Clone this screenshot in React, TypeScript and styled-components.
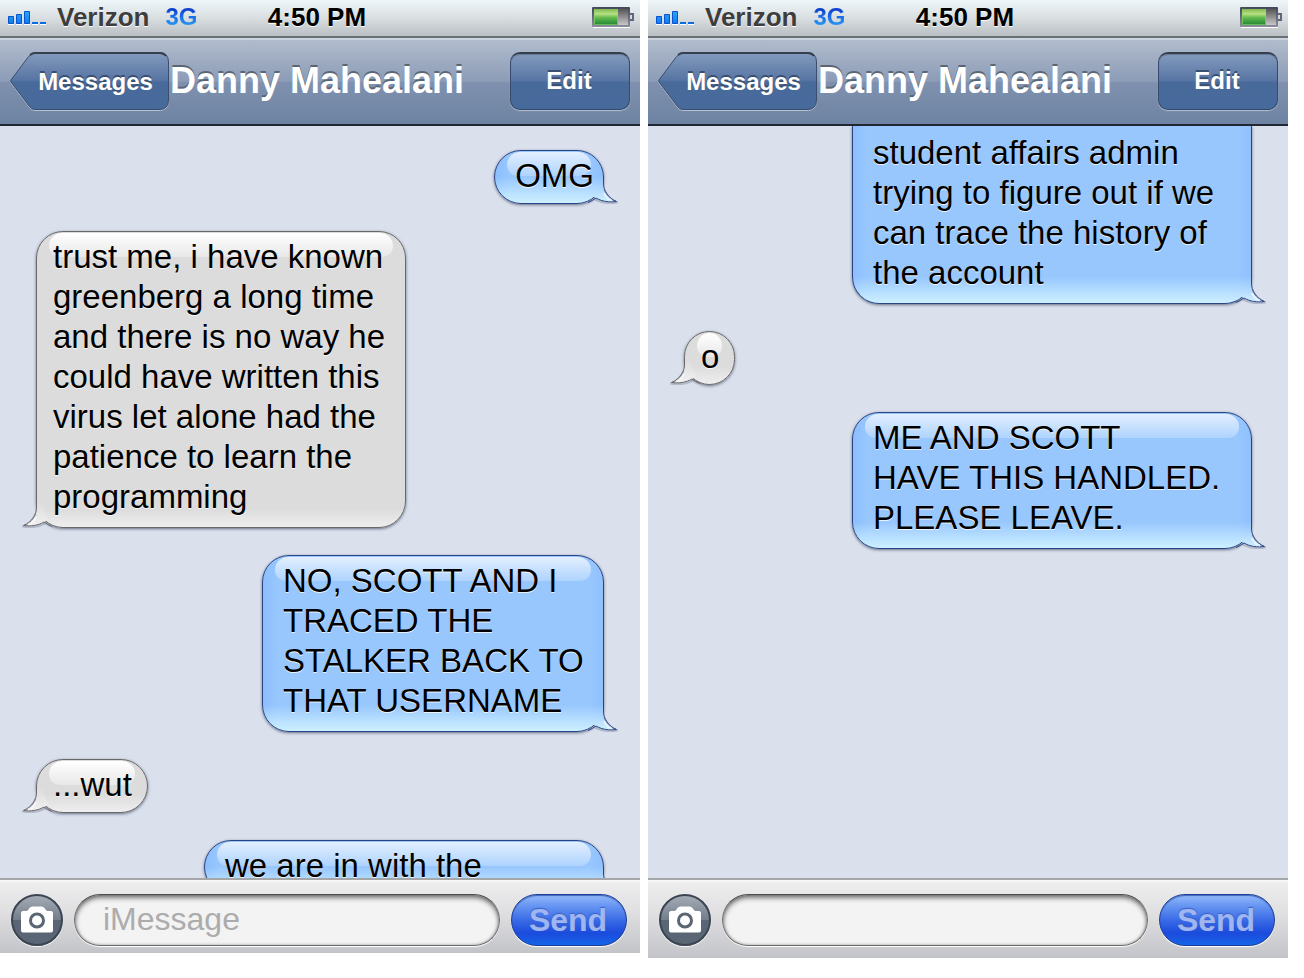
import React, { useId } from "react";
import styled, { createGlobalStyle, css } from "styled-components";

const sans = `"Liberation Sans", Arial, Helvetica, sans-serif`;

const GlobalStyle = createGlobalStyle`
  *, *::before, *::after { box-sizing: border-box; }
  body { margin: 0; background: #fff; font-family: ${sans}; }
  button, input { font-family: inherit; margin: 0; }
`;

type Tone = "blue" | "grey";

const Page = styled.main`
  display: grid;
  grid-template-columns: 1fr 1fr;
  align-items: start;
  gap: 8px;
  padding-right: 16px;
`;

const Phone = styled.section`
  display: flex;
  flex-direction: column;
  min-width: 0;
`;

const StatusBar = styled.div`
  display: grid;
  grid-template-columns: 1fr auto 1fr;
  align-items: center;
  height: 38px;
  padding: 0 6px 2px 0;
  border-bottom: 2px solid #6b7074;
  background: linear-gradient(#eff6f9, #d9dfe1 50%, #b9bfc2);
  font-size: 26px;
  line-height: 32px;
  font-weight: 700;
  text-shadow: 0 1px 0 #fff;
`;

const Carrier = styled.div`
  display: flex;
  align-items: center;
  gap: 10px;
  padding-left: 8px;
  color: #3d3d3d;
`;

const Network = styled.span`
  margin-left: 6px;
  font-size: 24px;
  text-shadow: none;
  color: transparent;
  background: linear-gradient(#0a35c8 20%, #1d6fe8 50%, #2ba4f6 85%);
  background-clip: text;
  -webkit-background-clip: text;
`;

const Clock = styled.time`
  color: #000;
`;

const BatterySlot = styled.div`
  display: flex;
  justify-content: flex-end;
`;

const NavBar = styled.header`
  display: flex;
  align-items: center;
  height: 88px;
  padding: 0 10px 2px;
  border-top: 2px solid #ccd4df;
  border-bottom: 2px solid #1f2733;
  background: linear-gradient(#b1bccd, #8b9bb6 50%, #7f91af 50%, #6e84a2);
`;

const Title = styled.h1`
  flex: 1;
  margin: 0;
  white-space: nowrap;
  color: #fff;
  font-size: 36px;
  line-height: 40px;
  font-weight: 700;
  text-shadow: 0 -2px 0 #5b6675;
`;

const buttonText = css`
  color: #fff;
  font-size: 24px;
  line-height: 28px;
  font-weight: 700;
  text-shadow: 0 -2px 0 #3a4e70;
`;

const BackButton = styled.button`
  ${buttonText}
  position: relative;
  width: 160px;
  height: 60px;
  padding: 2px 0 0 11px;
  border: 0;
  background: none;
`;

const BackShape = styled.svg`
  position: absolute;
  inset: 0;
`;

const BackLabel = styled.span`
  position: relative;
`;

const EditButton = styled.button`
  ${buttonText}
  width: 120px;
  height: 58px;
  padding: 0 2px 2px 0;
  border: 1px solid #34496c;
  border-top: 2px solid #363f4d;
  border-radius: 10px;
  background: linear-gradient(#839bbd, #5875a4 48%, #486a9b 52%, #476a9c);
  box-shadow: 0 1px 1px #b5c0d0, inset 0 1px 1px #65789a;
`;

const Conversation = styled.ol<{ $scrolled?: boolean }>`
  display: flex;
  flex-direction: column;
  gap: 27px;
  height: calc(100vh - 226px);
  min-height: 400px;
  margin: 0;
  padding: ${(p) => (p.$scrolled ? "0" : "24px")} 36px 0;
  overflow: hidden;
  list-style: none;
  background: #dae0ec;
`;

const tones = {
  blue: {
    edge: "#2a4384",
    side: "flex-end",
    end: "9px",
    start: "20px",
    fill: "linear-gradient(rgba(208,241,255,0), #cdf0ff) bottom / 100% 26px no-repeat, linear-gradient(90deg, #8cbefd, #98c7fe 14px, #98c7fe calc(100% - 14px), #90c1fd)",
  },
  grey: {
    edge: "#686868",
    side: "flex-start",
    end: "15px",
    start: "16px",
    fill: "linear-gradient(rgba(240,240,240,0), #eeeeee) bottom / 100% 18px no-repeat, linear-gradient(#dcdcdc, #dcdcdc)",
  },
};

const Bubble = styled.li<{ $tone: Tone; $width?: number; $long: boolean; $continued?: boolean }>`
  position: relative;
  flex: none;
  align-self: ${(p) => tones[p.$tone].side};
  width: ${(p) => (p.$width ? `${p.$width}px` : "auto")};
  max-width: 100%;
  padding: 5px ${(p) => tones[p.$tone].end} ${(p) => (p.$long ? 10 : 7)}px ${(p) => tones[p.$tone].start};
  border: 1px solid ${(p) => tones[p.$tone].edge};
  border-radius: 27px;
  background: ${(p) => tones[p.$tone].fill};
  box-shadow: 0 1px 3px rgba(40, 50, 80, 0.65);
  ${(p) =>
    p.$continued &&
    css`
      padding-top: 7px;
      border-top: 0;
      border-top-left-radius: 0;
      border-top-right-radius: 0;
    `}
`;

const Gloss = styled.span<{ $tone: Tone }>`
  position: absolute;
  top: 1px;
  left: 12px;
  right: 12px;
  height: 24px;
  border-radius: 14px 14px 12px 12px;
  background: ${(p) =>
    p.$tone === "blue"
      ? "linear-gradient(rgba(255,255,255,.72), rgba(255,255,255,.22))"
      : "linear-gradient(#fff, rgba(255,255,255,.35))"};
`;

const TailShape = styled.svg<{ $tone: Tone }>`
  position: absolute;
  bottom: -1px;
  ${(p) => (p.$tone === "blue" ? "right: -15px;" : "left: -15px; transform: scaleX(-1);")}
`;

const BubbleText = styled.p`
  position: relative;
  margin: 0;
  white-space: pre;
  color: #000;
  font-size: 33px;
  line-height: 40px;
  text-shadow: 0 1px 0 rgba(255, 255, 255, 0.8);
`;

const Composer = styled.form<{ $tall?: boolean }>`
  display: flex;
  align-items: center;
  gap: 11px;
  padding: 14px 13px ${(p) => (p.$tall ? 12 : 7)}px 11px;
  border-top: 2px solid #a5a6a8;
  background: linear-gradient(#fafafa, #ededee 3px, #dfdfe1 45%, #c3c4c9);
`;

const CameraButton = styled.button`
  display: grid;
  place-items: center;
  flex: none;
  width: 52px;
  height: 52px;
  padding: 0;
  border: 2px solid #3b4450;
  border-radius: 50%;
  background: linear-gradient(#a4abb6, #737d8b 50%, #596573 50%, #5a6675);
  box-shadow: 0 1px 1px #fff;
`;

const MessageInput = styled.input`
  flex: 1;
  min-width: 0;
  height: 52px;
  padding: 0 28px 1px;
  border: 1px solid #6d6d6d;
  border-top-color: #4d4d4d;
  border-radius: 26px;
  background: #f3f3f3;
  box-shadow: inset 0 3px 5px rgba(0, 0, 0, 0.5), inset 0 0 3px rgba(0, 0, 0, 0.3), 0 1px 1px #fff;
  color: #000;
  font-size: 32px;
  line-height: 40px;
  &::placeholder {
    color: #acacac;
    opacity: 1;
  }
`;

const SendButton = styled.button`
  flex: none;
  width: 116px;
  height: 52px;
  padding: 0 2px 0 0;
  border: 1px solid #1c3d9a;
  border-radius: 26px;
  background: linear-gradient(#94bafb, #6695f2 22%, #3b6be6 50%, #1b4bdc 76%, #1565e8);
  box-shadow: 0 1px 1px #fff, inset 0 1px 1px #3f66b8;
  color: #a0b6f0;
  font-size: 32px;
  line-height: 40px;
  font-weight: 700;
  text-shadow: 0 -1px 1px #3a62c4;
`;

function SignalIcon() {
  const id = useId();
  return (
    <svg width="39" height="16" viewBox="0 0 39 16" aria-hidden="true">
      <defs>
        <linearGradient id={id} x1="0" y1="0" x2="0" y2="1">
          <stop offset="0" stopColor="#25a7f8" />
          <stop offset="1" stopColor="#0f7df0" />
        </linearGradient>
      </defs>
      <path d="M0 15.500h6M8 15.500h6M16 15.500h6M24 15.500h6M32 15.500h6" stroke="#fff" />
      <g fill={`url(#${id})`} stroke="#0b52cf">
        <path d="M.5 7.500h5v7h-5zM8.500 5.500h5v9h-5zM16.500 2.500h5v12h-5z" />
      </g>
      <path d="M24 14h6M32 14h6" stroke="#0d6be0" strokeWidth="2" />
    </svg>
  );
}

function BatteryIcon() {
  const id = useId();
  return (
    <svg width="42" height="21" viewBox="0 0 42 21" role="img" aria-label="Battery">
      <defs>
        <linearGradient id={id + "g"} x1="0" y1="0" x2="0" y2="1">
          <stop offset="0" stopColor="#7cb94b" />
          <stop offset=".3" stopColor="#b9e083" />
          <stop offset=".55" stopColor="#5fb94b" />
          <stop offset="1" stopColor="#218536" />
        </linearGradient>
        <linearGradient id={id + "e"} x1="0" y1="0" x2="0" y2="1">
          <stop offset="0" stopColor="#555" />
          <stop offset="1" stopColor="#c8c8c8" />
        </linearGradient>
        <linearGradient id={id + "b"} x1="0" y1="0" x2="0" y2="1">
          <stop offset="0" stopColor="#44475a" />
          <stop offset="1" stopColor="#8a8d9c" />
        </linearGradient>
      </defs>
      <path d="M1 20.500h37" stroke="#fff" />
      <rect x="0" y="0" width="38" height="20" rx="1" fill={`url(#${id}b)`} />
      <path d="M38 6h4v8h-4z" fill="#62667a" />
      <path d="M38 8h2v4h-2z" fill="#d7d9e0" />
      <rect x="2" y="2" width="24" height="16" fill={`url(#${id}g)`} />
      <path d="M2.500 2v15.500h23V2" fill="none" stroke="#8ed96d" strokeOpacity=".6" />
      <rect x="26" y="2" width="10" height="16" fill={`url(#${id}e)`} />
    </svg>
  );
}

function BackOutline() {
  const id = useId();
  const shape =
    "M25 1.500H149Q158.500 1.500 158.500 11V49Q158.500 58.500 149 58.500H25Q22 58.500 19.500 55.500L1 31Q.500 30 1 29L17.500 7Q21.500 1.500 25 1.500Z";
  return (
    <BackShape width="160" height="61" viewBox="0 0 160 61" aria-hidden="true">
      <defs>
        <linearGradient id={id} x1="0" y1="0" x2="0" y2="1">
          <stop offset="0" stopColor="#839bbd" />
          <stop offset=".48" stopColor="#5875a4" />
          <stop offset=".52" stopColor="#486a9b" />
          <stop offset="1" stopColor="#476a9c" />
        </linearGradient>
      </defs>
      <path d={shape} fill="none" stroke="#b5c0d0" transform="translate(0 1)" />
      <path d={shape} fill={`url(#${id})`} stroke="#3a4d6e" />
      <path d="M20 4Q22.500 2 25 2H149Q154 2 156 5" fill="none" stroke="#363f4d" strokeWidth="2" />
    </BackShape>
  );
}

function CameraIcon() {
  return (
    <svg width="32" height="28" viewBox="0 0 32 28" aria-hidden="true">
      <path
        fill="#fff"
        d="M2 5H5Q6.500 5 7.500 3.500L8.500 2Q9.500 .5 11.500 .5H20.500Q22.500 .5 23.500 2L24.500 3.500Q25.500 5 27 5H30Q32 5 32 7V24.500Q32 26.500 30 26.500H2Q0 26.500 0 24.500V7Q0 5 2 5Z"
      />
      <circle cx="16" cy="14.500" r="6.500" fill="#fff" stroke="#596573" strokeWidth="3" />
    </svg>
  );
}

function Tail({ tone }: { tone: Tone }) {
  const id = useId();
  const blue = tone === "blue";
  return (
    <TailShape $tone={tone} width="40" height="29" viewBox="0 0 40 29" aria-hidden="true">
      <defs>
        <linearGradient id={id} gradientUnits="userSpaceOnUse" x1="0" y1="3" x2="0" y2="28">
          <stop offset="0" stopColor={blue ? "#94c4fd" : "#dcdcdc"} />
          <stop offset="1" stopColor={blue ? "#d3f1ff" : "#f2f2f2"} />
        </linearGradient>
      </defs>
      <path d="M25 2V9C25.500 16 30 23 38 26C31 28 24 26.500 18 23.500L14 20L22 2Z" fill={`url(#${id})`} />
      <path d="M26.500 15C29 21 32 24.500 39 27.500C32 29 24 28 17 24.500" fill="none" stroke="#364468" strokeOpacity=".25" strokeWidth="2" />
      <path
        d="M25.500 2V8C25.500 16 30 23 38.500 26.500C31 27.500 24 26.500 18 23Q15 25.500 10 27.500"
        fill="none"
        stroke={blue ? "#2a4384" : "#686868"}
      />
      <path d="M26 18C28 22 31 24.500 34 25.500" fill="none" stroke="#fff" strokeOpacity=".65" strokeWidth="2" />
    </TailShape>
  );
}

interface Message {
  tone: Tone;
  lines: string[];
  width?: number;
  continued?: boolean;
}

interface ScreenProps {
  messages: Message[];
  placeholder?: string;
  scrolled?: boolean;
  tall?: boolean;
}

function Screen({ messages, placeholder, scrolled, tall }: ScreenProps) {
  return (
    <Phone>
      <StatusBar>
        <Carrier>
          <SignalIcon />
          <span>Verizon</span>
          <Network>3G</Network>
        </Carrier>
        <Clock>4:50 PM</Clock>
        <BatterySlot>
          <BatteryIcon />
        </BatterySlot>
      </StatusBar>
      <NavBar>
        <BackButton type="button">
          <BackOutline />
          <BackLabel>Messages</BackLabel>
        </BackButton>
        <Title>Danny Mahealani</Title>
        <EditButton type="button">Edit</EditButton>
      </NavBar>
      <Conversation $scrolled={scrolled}>
        {messages.map((m) => (
          <Bubble
            key={m.lines[0]}
            $tone={m.tone}
            $width={m.width}
            $long={m.lines.length > 1}
            $continued={m.continued}
          >
            {!m.continued && <Gloss $tone={m.tone} />}
            <Tail tone={m.tone} />
            <BubbleText>{m.lines.join("\n")}</BubbleText>
          </Bubble>
        ))}
      </Conversation>
      <Composer $tall={tall} onSubmit={(e) => e.preventDefault()}>
        <CameraButton type="button" aria-label="Attach photo">
          <CameraIcon />
        </CameraButton>
        <MessageInput type="text" aria-label="Message" placeholder={placeholder} />
        <SendButton type="submit">Send</SendButton>
      </Composer>
    </Phone>
  );
}

const firstScreen: Message[] = [
  { tone: "blue", lines: ["OMG"] },
  {
    tone: "grey",
    width: 370,
    lines: [
      "trust me, i have known",
      "greenberg a long time",
      "and there is no way he",
      "could have written this",
      "virus let alone had the",
      "patience to learn the",
      "programming",
    ],
  },
  {
    tone: "blue",
    width: 342,
    lines: ["NO, SCOTT AND I", "TRACED THE", "STALKER BACK TO", "THAT USERNAME"],
  },
  { tone: "grey", lines: ["...wut"] },
  { tone: "blue", width: 400, lines: ["we are in with the"] },
];

const secondScreen: Message[] = [
  {
    tone: "blue",
    width: 400,
    continued: true,
    lines: ["student affairs admin", "trying to figure out if we", "can trace the history of", "the account"],
  },
  { tone: "grey", lines: ["o"] },
  { tone: "blue", width: 400, lines: ["ME AND SCOTT", "HAVE THIS HANDLED.", "PLEASE LEAVE."] },
];

export default function App() {
  return (
    <>
      <GlobalStyle />
      <Page>
        <Screen messages={firstScreen} placeholder="iMessage" />
        <Screen messages={secondScreen} scrolled tall />
      </Page>
    </>
  );
}
